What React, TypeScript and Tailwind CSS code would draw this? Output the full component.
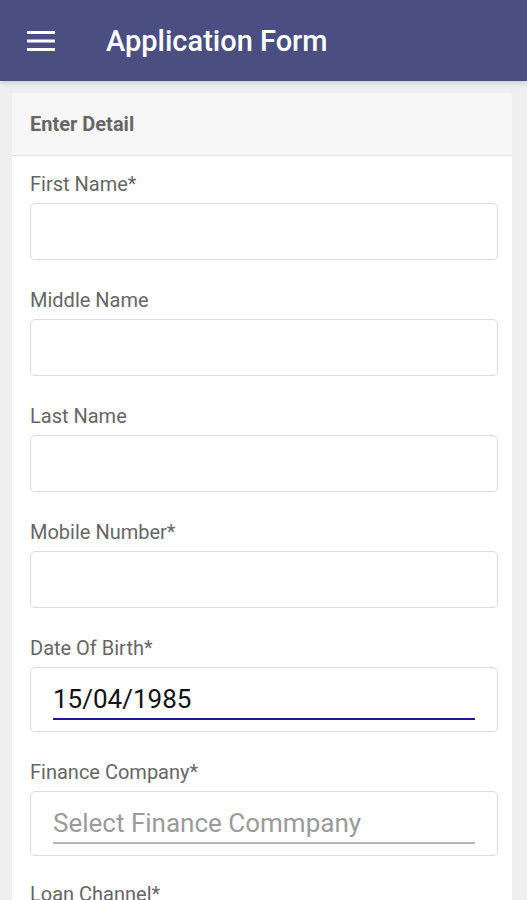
const plainFields = ['First Name*', 'Middle Name', 'Last Name', 'Mobile Number*']

function Label({ text }: { text: string }) {
  return <p className="text-[20px] leading-[24px] text-[#666666]">{text}</p>
}

export default function App() {
  return (
    <div className="min-h-[900px] bg-[#efefef] font-['Roboto',sans-serif]">
      <div className="flex h-[81px] items-center bg-[#4a4e80] shadow-md">
        <svg className="ml-[27px]" width="28" height="20" viewBox="0 0 28 20" fill="white">
          <rect x="0" y="0" width="28" height="3" />
          <rect x="0" y="8.5" width="28" height="3" />
          <rect x="0" y="17" width="28" height="3" />
        </svg>
        <h1 className="ml-[51px] mt-[2px] text-[29px] font-medium text-white">Application Form</h1>
      </div>

      <div className="ml-[12px] mr-[15px] mt-[12px] overflow-hidden rounded-t-[4px] bg-white">
        <div className="flex h-[63px] items-center border-b border-[#e3e3e3] bg-[#f7f7f7] px-[18px]">
          <h2 className="text-[20px] font-bold text-[#666666]">Enter Detail</h2>
        </div>

        <div className="pl-[18px] pr-[14px] pt-[16px]">
          {plainFields.map((f) => (
            <div key={f} className="mb-[28px]">
              <Label text={f} />
              <div className="mt-[7px] h-[57px] rounded-[5px] border border-[#dcdcdc]" />
            </div>
          ))}

          <div className="mb-[28px]">
            <Label text="Date Of Birth*" />
            <div className="mt-[7px] h-[65px] rounded-[5px] border border-[#dcdcdc] px-[22px] pt-[16px]">
              <div className="border-b-2 border-[#1c1c8c] pb-[4px] text-[26px] leading-[30px] text-[#111111]">15/04/1985</div>
            </div>
          </div>

          <div className="mb-[26px]">
            <Label text="Finance Company*" />
            <div className="mt-[7px] h-[65px] rounded-[5px] border border-[#dcdcdc] px-[22px] pt-[16px]">
              <div className="border-b-2 border-[#b5b5b5] pb-[4px] text-[26px] leading-[30px] text-[#9a9a9a]">Select Finance Commpany</div>
            </div>
          </div>

          <Label text="Loan Channel*" />
          <div className="mt-[7px] h-[57px] rounded-[5px] border border-[#dcdcdc]" />
        </div>
      </div>
    </div>
  )
}
